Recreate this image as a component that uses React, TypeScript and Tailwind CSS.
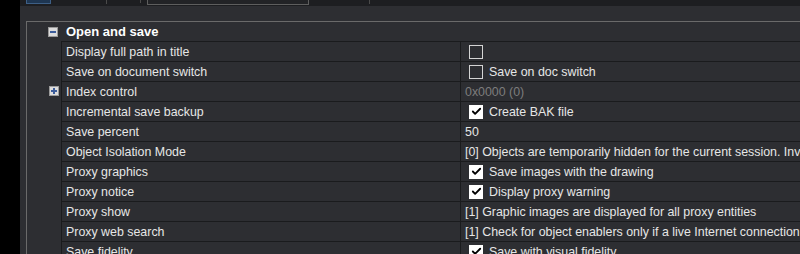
import { Check } from "lucide-react";

type Row = {
  label: string;
  value?: string;
  check?: boolean;
  checked?: boolean;
  muted?: boolean;
  expand?: boolean;
};

const rows: Row[] = [
  { label: "Display full path in title", check: true, checked: false },
  { label: "Save on document switch", check: true, checked: false, value: "Save on doc switch" },
  { label: "Index control", value: "0x0000 (0)", muted: true, expand: true },
  { label: "Incremental save backup", check: true, checked: true, value: "Create BAK file" },
  { label: "Save percent", value: "50" },
  { label: "Object Isolation Mode", value: "[0] Objects are temporarily hidden for the current session. Invisible objects are not saved" },
  { label: "Proxy graphics", check: true, checked: true, value: "Save images with the drawing" },
  { label: "Proxy notice", check: true, checked: true, value: "Display proxy warning" },
  { label: "Proxy show", value: "[1] Graphic images are displayed for all proxy entities" },
  { label: "Proxy web search", value: "[1] Check for object enablers only if a live Internet connection is available" },
  { label: "Save fidelity", check: true, checked: true, value: "Save with visual fidelity" },
];

function Box({ checked }: { checked?: boolean }) {
  return checked ? (
    <span className="w-[14px] h-[14px] bg-white flex items-center justify-center shrink-0">
      <Check size={11} strokeWidth={4} className="text-black" />
    </span>
  ) : (
    <span className="w-[14px] h-[14px] border border-[#d4d4d4] shrink-0" />
  );
}

function TreeToggle({ open }: { open?: boolean }) {
  return (
    <span className="w-[10px] h-[10px] bg-[#dcdcdc] border border-[#9a9a9a] flex items-center justify-center relative">
      <span className="absolute w-[6px] h-[2px] bg-[#3b5c9a]" />
      {!open && <span className="absolute w-[2px] h-[6px] bg-[#3b5c9a]" />}
    </span>
  );
}

export default function App() {
  return (
    <div className="w-[800px] h-[254px] bg-black flex overflow-hidden text-[12.4px] text-[#e6e6e6] font-['Liberation_Sans',sans-serif]">
      <div className="w-[20px] shrink-0 bg-black" />
      <div className="flex-1 bg-[#2d2e32] flex flex-col">
        {/* toolbar strip */}
        <div className="h-[6px] bg-[#1d1e21] flex items-start shrink-0">
          <div className="ml-[6px] w-[25px] h-[4px] bg-[#1e3652] border-x border-b border-[#3d5f86]" />
          <div className="ml-[55px] w-px h-[4px] bg-[#4a4a4a]" />
          <div className="ml-[33px] w-px h-[3px] bg-[#4a4a4a]" />
          <div className="ml-[6px] w-[162px] h-[5px] border-x border-b border-[#5e5e5e] bg-[#222326]" />
          <div className="ml-[60px] w-px h-[4px] bg-[#4a4a4a]" />
        </div>
        <div className="h-[15px] shrink-0" />
        <div className="ml-[6px] flex-1 border-t border-l border-[#6a6a6a] flex flex-col">
          {/* group header */}
          <div className="h-[19px] flex items-center shrink-0">
            <div className="w-[21px]" />
            <TreeToggle open />
            <span className="ml-[8px] font-bold text-[13px] text-white">Open and save</span>
          </div>
          {rows.map((r) => (
            <div key={r.label} className="h-[20px] flex shrink-0">
              <div className="w-[34px] flex items-center justify-end pr-[2px] shrink-0">
                {r.expand && <TreeToggle />}
              </div>
              <div className="flex-1 flex border-t border-l border-[#1a1b1d] overflow-hidden">
                <div className="w-[399px] shrink-0 pl-[4px] pt-px flex items-center border-r border-[#1a1b1d] whitespace-nowrap">
                  {r.label}
                </div>
                <div className="flex-1 flex items-center whitespace-nowrap overflow-hidden">
                  {r.check ? (
                    <div className="pl-[8px] flex items-center gap-[6px]">
                      <Box checked={r.checked} />
                      {r.value && <span className="pt-px">{r.value}</span>}
                    </div>
                  ) : (
                    <span className={"pl-[4px] pt-px " + (r.muted ? "text-[#7d7d7d]" : "")}>{r.value}</span>
                  )}
                </div>
              </div>
            </div>
          ))}
        </div>
      </div>
    </div>
  );
}
